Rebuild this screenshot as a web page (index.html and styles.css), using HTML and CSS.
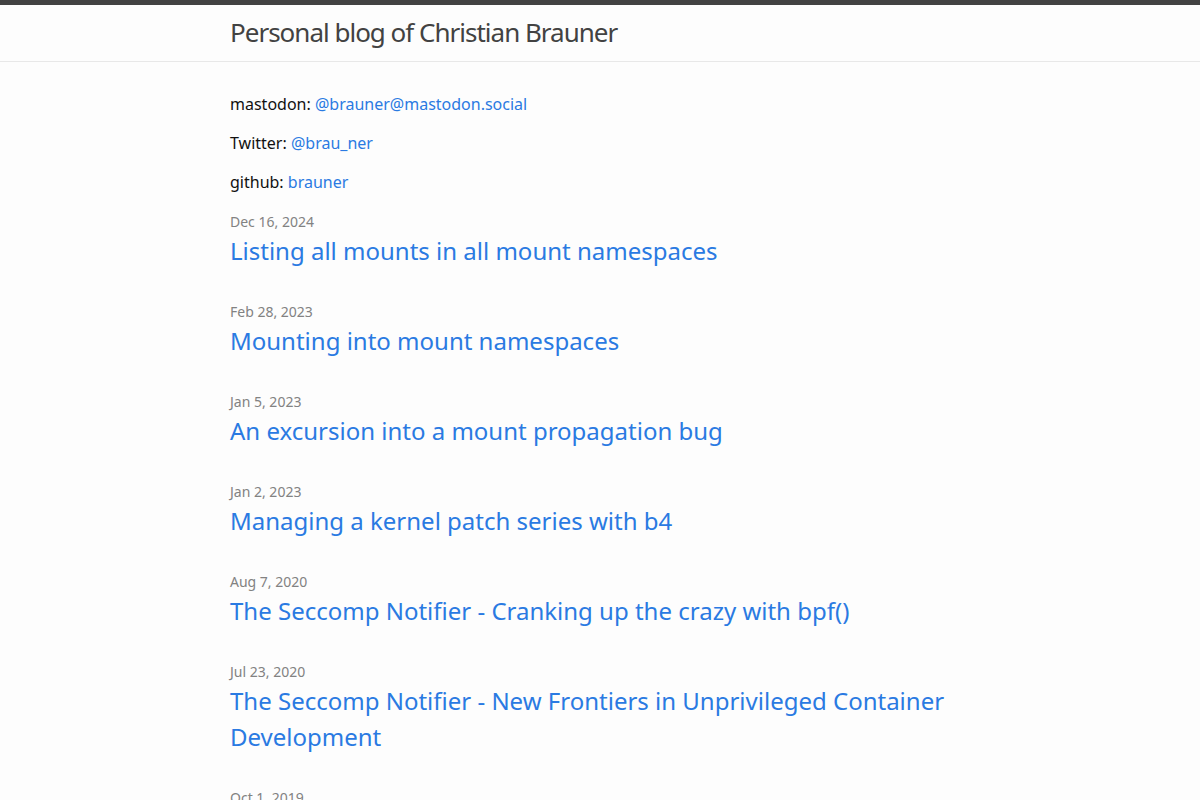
FILE: index.html
```
<!DOCTYPE html>
<html lang="en">

<head>
    <meta charset="UTF-8">
    <meta name="viewport" content="width=device-width, initial-scale=1.0">
    <title>Personal blog of Christian Brauner</title>
    <link rel="stylesheet" href="styles.css">
</head>

<body>
    <header class="site-header">
        <div class="wrapper">
            <a class="site-title" href="#">Personal blog of Christian Brauner</a>
        </div>
    </header>

    <main class="page-content">
        <div class="wrapper">
            <div class="home">
                <p>mastodon: <a href="#">@brauner@mastodon.social</a></p>
                <p>Twitter: <a href="#">@brau_ner</a></p>
                <p>github: <a href="#">brauner</a></p>

                <ul class="post-list">
                    <li>
                        <span class="post-meta">Dec 16, 2024</span>
                        <h2><a class="post-link" href="#">Listing all mounts in all mount namespaces</a></h2>
                    </li>
                    <li>
                        <span class="post-meta">Feb 28, 2023</span>
                        <h2><a class="post-link" href="#">Mounting into mount namespaces</a></h2>
                    </li>
                    <li>
                        <span class="post-meta">Jan 5, 2023</span>
                        <h2><a class="post-link" href="#">An excursion into a mount propagation bug</a></h2>
                    </li>
                    <li>
                        <span class="post-meta">Jan 2, 2023</span>
                        <h2><a class="post-link" href="#">Managing a kernel patch series with b4</a></h2>
                    </li>
                    <li>
                        <span class="post-meta">Aug 7, 2020</span>
                        <h2><a class="post-link" href="#">The Seccomp Notifier - Cranking up the crazy with bpf()</a></h2>
                    </li>
                    <li>
                        <span class="post-meta">Jul 23, 2020</span>
                        <h2><a class="post-link" href="#">The Seccomp Notifier - New Frontiers in Unprivileged Container Development</a></h2>
                    </li>
                    <li>
                        <span class="post-meta">Oct 1, 2019</span>
                        <h2><a class="post-link" href="#">Runtimes And the Curse of the Privileged Container</a></h2>
                    </li>
                </ul>
            </div>
        </div>
    </main>
</body>

</html>
```

FILE: styles.css
```
body {
    margin: 0;
    font-family: "Noto Sans", "Open Sans", sans-serif;
    font-size: 16px;
    line-height: 1.5;
    color: #111;
    background-color: #fdfdfd;
}

a {
    color: #2a7ae2;
    text-decoration: none;
}

.wrapper {
    max-width: 740px;
    margin: 0 auto;
    padding: 0 30px;
}

.site-header {
    border-top: 5px solid #424242;
    border-bottom: 1px solid #e8e8e8;
    min-height: 56px;
}

.site-title {
    display: block;
    font-size: 26px;
    font-weight: 400;
    line-height: 54px;
    letter-spacing: -1px;
    color: #424242;
}

.page-content {
    padding: 30px 0;
}

.home p {
    margin: 0 0 15px;
}

.post-list {
    margin: 0;
    padding: 0;
    list-style: none;
}

.post-list li {
    margin-bottom: 30px;
}

.post-meta {
    font-size: 14px;
    color: #828282;
}

.post-list h2 {
    margin: 0;
    font-size: 24px;
    font-weight: 400;
    line-height: 36px;
}

.post-link {
    display: block;
}
```
